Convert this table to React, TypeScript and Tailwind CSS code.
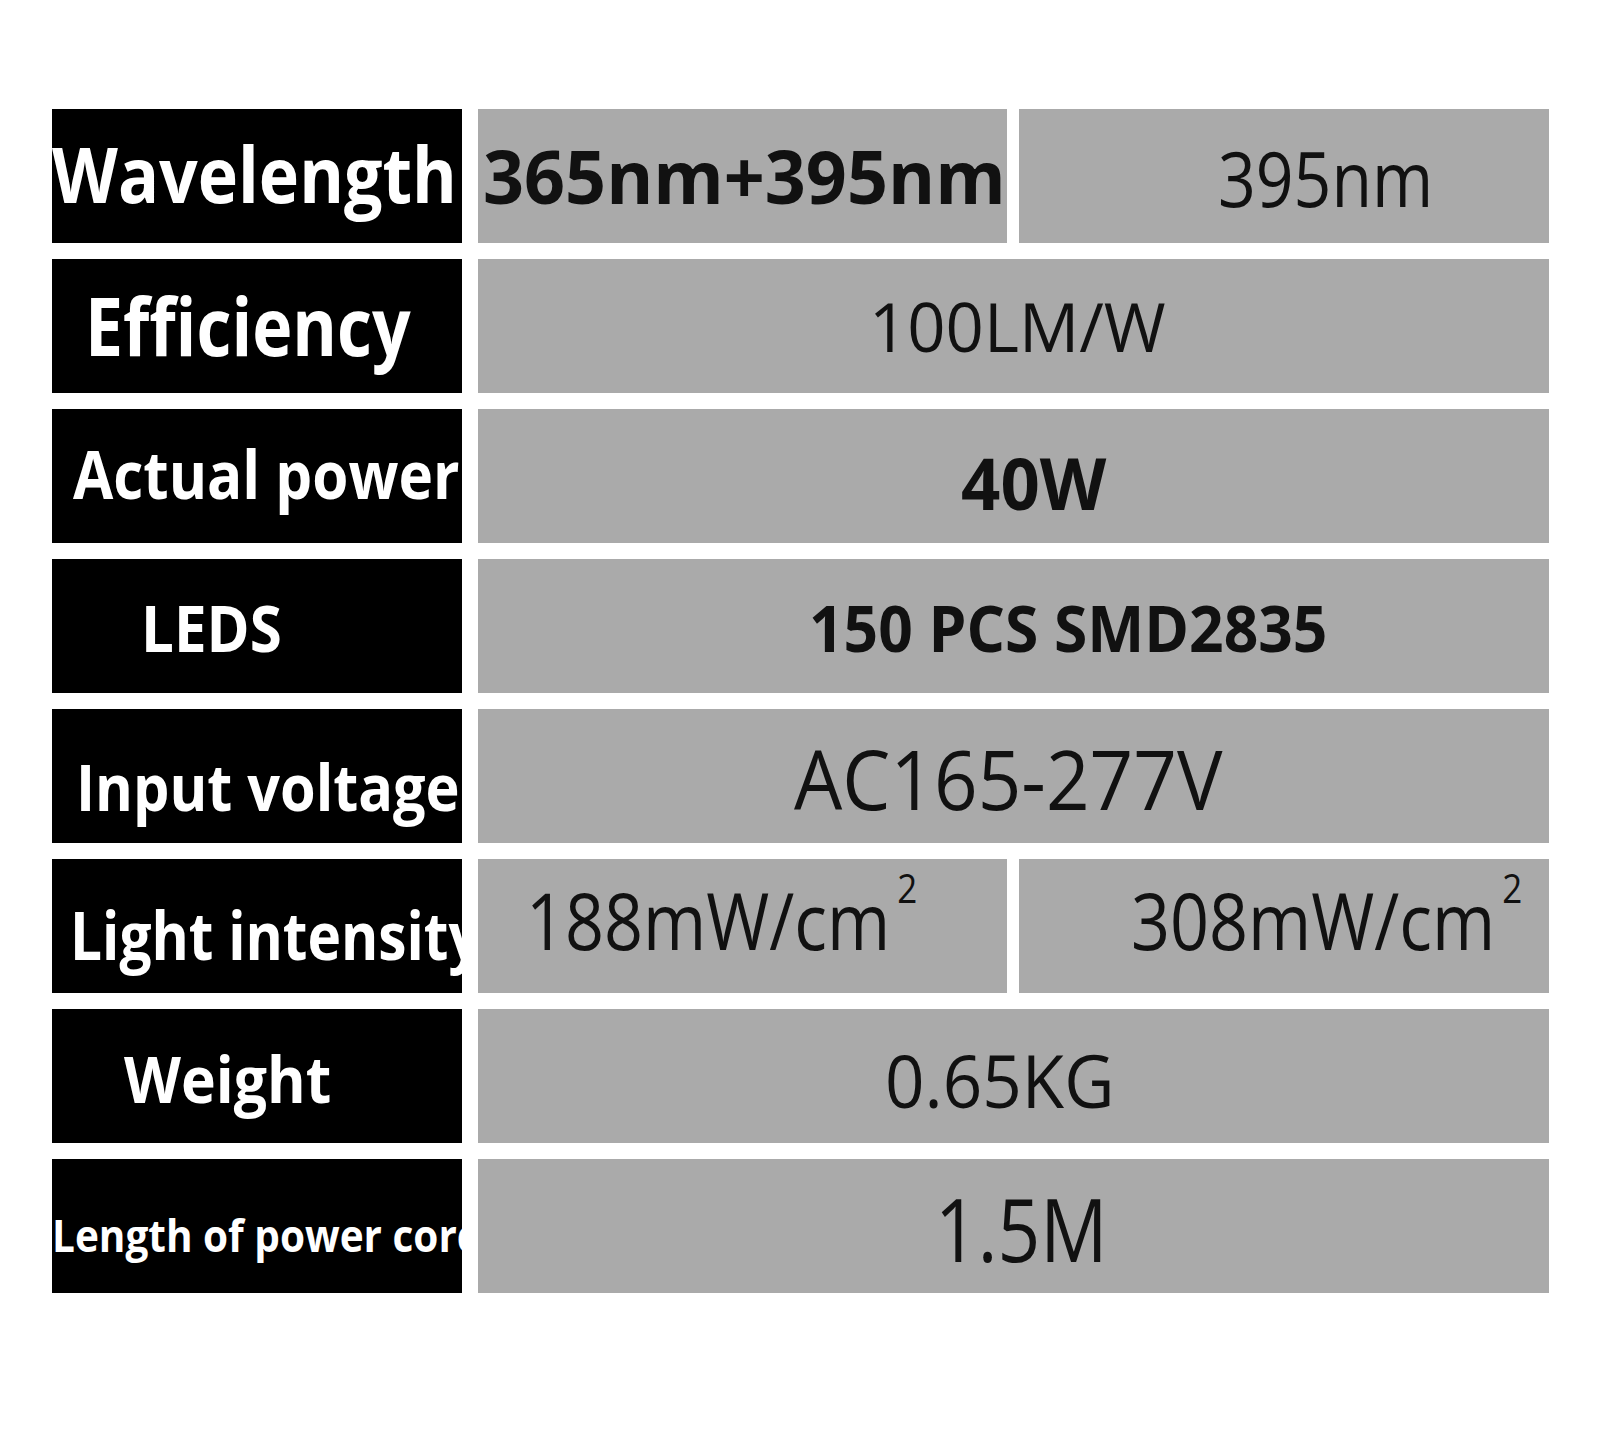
import React from "react";

type Cell = {
  text: string;
  sup?: string;
  cls: string; // padding / offsets of the cell
  textCls: string; // font size, weight, scale
};

type Row = {
  label: Cell;
  values: Cell[];
};

const rows: Row[] = [
  {
    label: { text: "Wavelength", cls: "pl-0 pb-[5px]", textCls: "text-[77px] scale-x-[0.885]" },
    values: [
      { text: "365nm+395nm", cls: "pl-[5px]", textCls: "text-[74px] font-bold scale-x-[0.97]" },
      { text: "395nm", cls: "pl-[199px] pt-[4px]", textCls: "text-[76px] scale-x-[0.87]" },
    ],
  },
  {
    label: { text: "Efficiency", cls: "pl-[33px] pb-[3px]", textCls: "text-[80px] scale-x-[0.85]" },
    values: [{ text: "100LM/W", cls: "pl-[391px]", textCls: "text-[67px] scale-x-[1]" }],
  },
  {
    label: { text: "Actual power", cls: "pl-[21px] pb-[7px]", textCls: "text-[66px] scale-x-[0.885]" },
    values: [{ text: "40W", cls: "pl-[483px] pt-[13px]", textCls: "text-[71px] font-bold scale-x-[0.97]" }],
  },
  {
    label: { text: "LEDS", cls: "pl-[89px] pt-[4px]", textCls: "text-[64px] scale-x-[0.91]" },
    values: [
      { text: "150 PCS SMD2835", cls: "pl-[331px] pt-[4px]", textCls: "text-[64px] font-bold scale-x-[0.945]" },
    ],
  },
  {
    label: { text: "Input voltage", cls: "pl-[24px] pt-[22px]", textCls: "text-[64px] scale-x-[0.9]" },
    values: [{ text: "AC165-277V", cls: "pl-[316px] pt-[3px]", textCls: "text-[83px] scale-x-[0.92]" }],
  },
  {
    label: { text: "Light intensity", cls: "pl-[18px] pt-[16px]", textCls: "text-[66px] scale-x-[0.86]" },
    values: [
      { text: "188mW/cm", sup: "2", cls: "pl-[48px] pb-[13px]", textCls: "text-[78px] scale-x-[0.875]" },
      { text: "308mW/cm", sup: "2", cls: "pl-[112px] pb-[13px]", textCls: "text-[78px] scale-x-[0.875]" },
    ],
  },
  {
    label: { text: "Weight", cls: "pl-[72px] pt-[6px]", textCls: "text-[64px] scale-x-[0.92]" },
    values: [{ text: "0.65KG", cls: "pl-[407px] pt-[7px]", textCls: "text-[74px] scale-x-[0.935]" }],
  },
  {
    label: { text: "Length of power cord", cls: "pl-0 pt-[17px]", textCls: "text-[45px] scale-x-[0.9]" },
    values: [{ text: "1.5M", cls: "pl-[457px] pt-[3px]", textCls: "text-[88px] scale-x-[0.85]" }],
  },
];

function ValueCell({ cell, grow }: { cell: Cell; grow: boolean }) {
  return (
    <div
      className={`${grow ? "flex-1" : "w-[529px]"} h-full bg-[#aaaaaa] overflow-hidden flex items-center whitespace-nowrap text-[#111111] ${cell.cls}`}
    >
      <div className={`inline-flex items-start origin-left leading-none ${cell.textCls}`}>
        <span className="leading-none">{cell.text}</span>
        {cell.sup ? (
          <span className="text-[40px] leading-none ml-[8px] -mt-[13px]">{cell.sup}</span>
        ) : null}
      </div>
    </div>
  );
}

export default function App() {
  return (
    <div className="w-[1600px] h-[1437px] bg-white font-['Open_Sans',sans-serif] pt-[109px] pl-[52px] flex flex-col gap-[16px]">
      {rows.map((row, i) => (
        <div key={i} className="flex gap-[16px] h-[134px] w-[1497px]">
          <div
            className={`w-[410px] h-full bg-black text-white font-bold overflow-hidden flex items-center whitespace-nowrap ${row.label.cls}`}
          >
            <span className={`inline-block origin-left leading-none ${row.label.textCls}`}>{row.label.text}</span>
          </div>
          <div className="w-[1071px] h-full flex gap-[12px]">
            {row.values.map((v, j) => (
              <ValueCell key={j} cell={v} grow={row.values.length === 1 || j === 1} />
            ))}
          </div>
        </div>
      ))}
    </div>
  );
}
